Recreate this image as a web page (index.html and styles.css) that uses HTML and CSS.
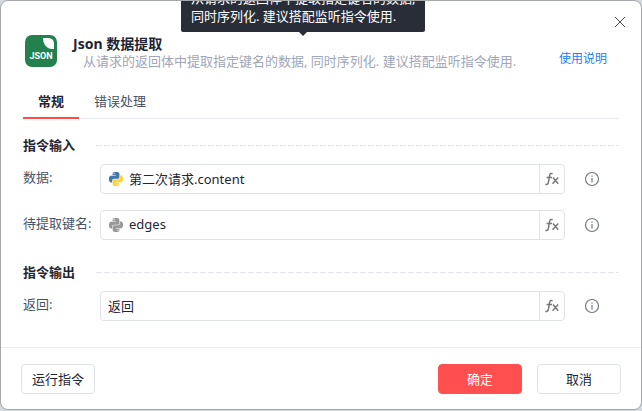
FILE: index.html
```html
<!DOCTYPE html>
<html lang="zh-CN">
<head>
    <meta charset="UTF-8">
    <meta name="viewport" content="width=device-width, initial-scale=1.0">
    <title>Json 数据提取</title>
    <link rel="stylesheet" href="styles.css">
</head>
<body>
    <!-- shared icons -->
    <svg class="sprite" aria-hidden="true">
        <symbol id="python" viewBox="0 0 24 24">
            <path class="snake1" d="M14.25.18l.9.2.73.26.59.3.45.32.34.34.25.34.16.33.1.3.04.26.02.2-.01.13V8.5l-.05.63-.13.55-.21.46-.26.38-.3.31-.33.25-.35.19-.35.14-.33.1-.3.07-.26.04-.21.02H8.77l-.69.05-.59.14-.5.22-.41.27-.33.32-.27.35-.2.36-.15.37-.1.35-.07.32-.04.27-.02.21v3.06H3.17l-.21-.03-.28-.07-.32-.12-.35-.18-.36-.26-.36-.36-.35-.46-.32-.59-.28-.73-.21-.88-.14-1.05-.05-1.23.06-1.22.16-1.04.24-.87.32-.71.36-.57.4-.44.42-.33.42-.24.4-.16.36-.1.32-.05.24-.01h.16l.06.01h8.16v-.83H6.18l-.01-2.75-.02-.37.05-.34.11-.31.17-.28.25-.26.31-.23.38-.2.44-.18.51-.15.58-.12.64-.1.71-.06.77-.04.84-.02 1.27.05zm-6.3 1.98l-.23.33-.08.41.08.41.23.34.33.22.41.09.41-.09.33-.22.23-.34.08-.41-.08-.41-.23-.33-.33-.22-.41-.09-.41.09z"/>
            <path class="snake2" d="M21.04 6.11l.28.06.32.12.35.18.36.27.36.35.35.47.32.59.28.73.21.88.14 1.04.05 1.23-.06 1.23-.16 1.04-.24.86-.32.71-.36.57-.4.45-.42.33-.42.24-.4.16-.36.09-.32.05-.24.02-.16-.01h-8.22v.82h5.84l.01 2.76.02.36-.05.34-.11.31-.17.29-.25.25-.31.24-.38.2-.44.17-.51.15-.58.13-.64.09-.71.07-.77.04-.84.01-1.27-.04-1.07-.14-.9-.2-.73-.25-.59-.3-.45-.33-.34-.34-.25-.34-.16-.33-.1-.3-.04-.25-.02-.2.01-.13v-5.34l.05-.64.13-.54.21-.46.26-.38.3-.32.33-.24.35-.2.35-.14.33-.1.3-.06.26-.04.21-.02.13-.01h5.84l.69-.05.59-.14.5-.21.41-.28.33-.32.27-.35.2-.36.15-.36.1-.35.07-.32.04-.28.02-.21V6.07h2.09l.14.01zm-6.47 14.25l-.23.33-.08.41.08.41.23.33.33.23.41.08.41-.08.33-.23.23-.33.08-.41-.08-.41-.23-.33-.33-.23-.41-.08-.41.08z"/>
        </symbol>
        <symbol id="fx" viewBox="0 0 16 16">
            <path d="M8.6 2.7C6.8 2 5.9 2.8 5.6 4.6L4.4 11.4C4.1 13.2 3.2 13.9 1.4 13.2M2.6 6.5H8M9 6.5L14.2 12.8M14.2 6.5L8.6 12.8"/>
        </symbol>
        <symbol id="info" viewBox="0 0 16 16">
            <circle cx="8" cy="8" r="6.5"/>
            <path d="M8 7v4.5M8 4.5v1.2"/>
        </symbol>
    </svg>

    <form class="dialog">
        <div class="tooltip" role="tooltip">从请求的返回体中提取指定键名的数据, 同时序列化. 建议搭配监听指令使用.</div>
        <button type="button" class="close" aria-label="关闭">
            <svg viewBox="0 0 12 12"><path d="M1 1l10 10M11 1L1 11"/></svg>
        </button>

        <header class="header">
            <svg class="logo" viewBox="0 0 32 32">
                <rect width="32" height="32" rx="7"/>
                <path d="M18 3h5q6 0 6 6v5h-3q-8-2-8-11z"/>
                <text x="16" y="24" text-anchor="middle">JSON</text>
            </svg>
            <div class="heading">
                <h1>Json 数据提取</h1>
                <p>从请求的返回体中提取指定键名的数据, 同时序列化. 建议搭配监听指令使用.</p>
            </div>
            <a class="help" href="#">使用说明</a>
        </header>

        <nav class="tabs">
            <button type="button" class="tab active">常规</button>
            <button type="button" class="tab">错误处理</button>
        </nav>

        <main class="content">
            <section>
                <h2>指令输入</h2>
                <div class="row">
                    <label for="data">数据:</label>
                    <div class="control">
                        <svg class="python"><use href="#python"/></svg>
                        <input type="text" id="data" value="第二次请求.content">
                        <button type="button" class="fx" aria-label="函数"><svg><use href="#fx"/></svg></button>
                    </div>
                    <svg class="info"><use href="#info"/></svg>
                </div>
                <div class="row">
                    <label for="key">待提取键名:</label>
                    <div class="control">
                        <svg class="python off"><use href="#python"/></svg>
                        <input type="text" id="key" value="edges">
                        <button type="button" class="fx" aria-label="函数"><svg><use href="#fx"/></svg></button>
                    </div>
                    <svg class="info"><use href="#info"/></svg>
                </div>
            </section>
            <section>
                <h2>指令输出</h2>
                <div class="row">
                    <label for="result">返回:</label>
                    <div class="control">
                        <input type="text" id="result" value="返回">
                        <button type="button" class="fx" aria-label="函数"><svg><use href="#fx"/></svg></button>
                    </div>
                    <svg class="info"><use href="#info"/></svg>
                </div>
            </section>
        </main>

        <footer class="footer">
            <button type="button" class="btn run">运行指令</button>
            <button type="submit" class="btn primary">确定</button>
            <button type="button" class="btn">取消</button>
        </footer>
    </form>
</body>
</html>
```
FILE: styles.css
```css
* {
    box-sizing: border-box;
}
body {
    margin: 0;
    padding-bottom: 1px;
    background: #d3d7de;
    color: #1f2533;
}
body, button, input {
    font-family: "Noto Sans", "Noto Sans CJK SC", sans-serif;
    font-size: 13px;
}
button, input {
    color: inherit;
    border: 0;
    padding: 0;
    background: none;
}
h1, h2, p {
    margin: 0;
}
.sprite {
    display: none;
}
.dialog {
    position: relative;
    display: flex;
    flex-direction: column;
    min-height: calc(100vh - 1px);
    overflow: hidden;
    background: #fff;
    border: 1px solid #a6a8ab;
    border-radius: 8px;
}
.tooltip {
    position: absolute;
    left: 180px;
    bottom: calc(100% - 31px);
    width: 244px;
    padding: 7px 8px 7px 10px;
    line-height: 18px;
    color: #fff;
    background: #292d38;
    border-radius: 2px;
}
.tooltip::after {
    content: "";
    position: absolute;
    left: 50%;
    top: 100%;
    margin-left: -4px;
    border: 4px solid transparent;
    border-top-color: #292d38;
    border-bottom: 0;
}
.close {
    position: absolute;
    top: 15px;
    right: 15px;
    width: 12px;
    height: 12px;
}
.close svg {
    display: block;
    width: 12px;
    height: 12px;
    fill: none;
    stroke: #4b4b4b;
}
.header {
    display: flex;
    gap: 16px;
    padding: 34px 34px 0 24px;
}
.logo {
    width: 32px;
    height: 32px;
    fill: #22814d;
}
.logo path, .logo text {
    fill: #fff;
}
.logo text {
    font: bold 9px Roboto, sans-serif;
}
.heading {
    flex: 1;
}
h1 {
    font-size: 14px;
    line-height: 18px;
}
.heading p {
    padding-left: 10px;
    line-height: 16px;
    color: #a0a6b8;
    white-space: nowrap;
}
.help {
    padding-top: 16px;
    font-size: 12px;
    line-height: 16px;
    color: #1a7dff;
    text-decoration: none;
    white-space: nowrap;
}
.tabs {
    display: flex;
    margin: 16px 22px 0;
    border-bottom: 1px solid #e9ebf3;
}
.tab {
    height: 34px;
    margin-bottom: -1px;
    padding: 0 15px 1px;
    color: #4a5366;
    border-bottom: 2px solid transparent;
}
.tab.active {
    font-weight: bold;
    color: #1f2533;
    border-bottom-color: #ff4d4d;
}
.content {
    flex: 1;
    display: flex;
    flex-direction: column;
    gap: 22px;
    padding: 16px 22px 24px;
}
section {
    display: flex;
    flex-direction: column;
    gap: 16px;
}
h2 {
    display: flex;
    align-items: center;
    gap: 21px;
    margin-bottom: -7px;
    font-size: 13px;
    line-height: 20px;
}
h2::after {
    content: "";
    flex: 1;
    height: 1px;
    background: repeating-linear-gradient(90deg, #e2e4ea 0 6px, transparent 6px 8px);
}
.row {
    display: flex;
    align-items: center;
}
label {
    flex: none;
    width: 77px;
    padding-bottom: 5px;
    line-height: 18px;
    color: #4a5366;
    white-space: nowrap;
}
.control {
    flex: 1;
    display: flex;
    align-items: center;
    min-width: 0;
    height: 30px;
    padding-left: 7px;
    border: 1px solid #e0e2ea;
    border-radius: 4px;
}
.control input {
    flex: 1;
    min-width: 0;
    height: 28px;
    padding-bottom: 2px;
    outline: none;
}
.python {
    flex: none;
    width: 14px;
    height: 14px;
    margin: 0 6px 0 1px;
    --head: #3f78a9;
    --tail: #ffd43b;
}
.python.off {
    --head: #999;
    --tail: #999;
}
.snake1 {
    fill: var(--head);
}
.snake2 {
    fill: var(--tail);
}
.fx {
    display: flex;
    align-items: center;
    justify-content: center;
    width: 25px;
    height: 28px;
    border-left: 1px solid #e0e2ea;
}
.fx svg {
    width: 16px;
    height: 16px;
    fill: none;
    stroke: #777;
    stroke-width: 1.5;
}
.info {
    flex: none;
    width: 16px;
    height: 16px;
    margin: 0 19px;
    fill: none;
    stroke: #747881;
    stroke-width: 1.2;
}
.footer {
    display: flex;
    gap: 15px;
    padding: 16px 20px 15px;
    border-top: 1px solid #ebecf0;
}
.btn {
    width: 84px;
    height: 30px;
    padding-bottom: 2px;
    border: 1px solid #e0e2ea;
    border-radius: 4px;
}
.btn.run {
    width: 74px;
    margin-right: auto;
}
.btn.primary {
    color: #fff;
    background: #ff4f4f;
    border-color: #ff4f4f;
}
```
